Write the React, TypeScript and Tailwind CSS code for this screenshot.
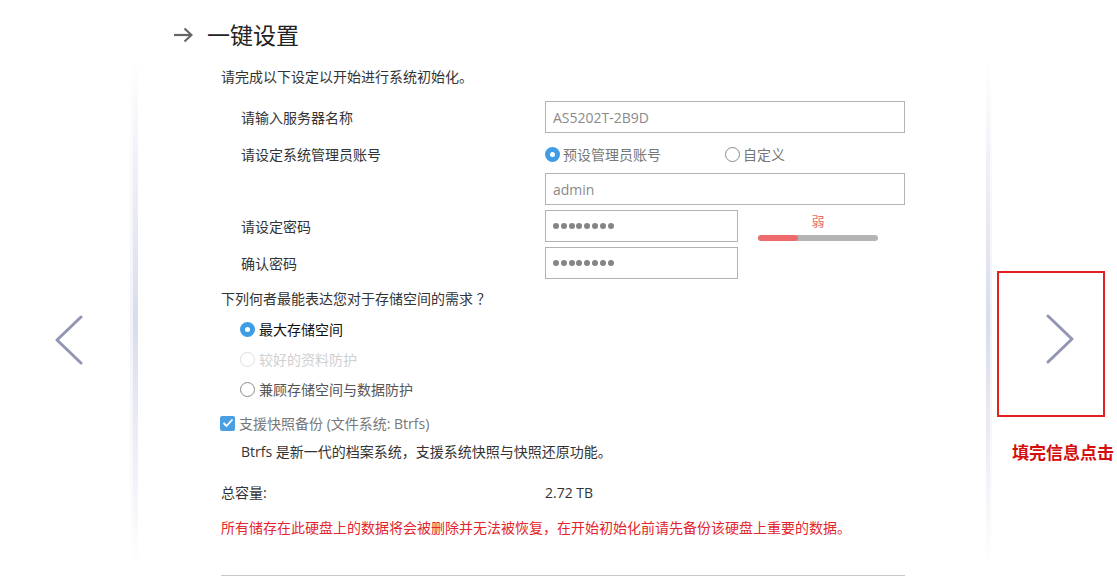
import React from "react";

const FONT = '"Open Sans", "Noto Sans CJK SC", sans-serif';

function Radio({ state }: { state: "on" | "off" | "disabled" }) {
  if (state === "on") {
    return (
      <span className="w-[15px] h-[15px] rounded-full bg-[#3f9de6] flex items-center justify-center shrink-0">
        <span className="w-[5px] h-[5px] rounded-full bg-white" />
      </span>
    );
  }
  return (
    <span
      className={
        "w-[15px] h-[15px] rounded-full border shrink-0 bg-white " +
        (state === "off" ? "border-[#8a8a8a]" : "border-[#dddddd]")
      }
    />
  );
}

function Dots() {
  return (
    <div className="flex gap-[1.8px]">
      {Array.from({ length: 8 }).map((_, i) => (
        <span key={i} className="w-[6px] h-[6px] rounded-full bg-[#858585]" />
      ))}
    </div>
  );
}

function Chevron({ dir }: { dir: "left" | "right" }) {
  return (
    <svg width="28" height="50" viewBox="0 0 28 50" fill="none">
      <polyline
        points={dir === "left" ? "26,2 2,25 26,48" : "2,2 26,25 2,48"}
        stroke="#9296b4"
        strokeWidth="3"
        strokeLinecap="round"
        strokeLinejoin="round"
      />
    </svg>
  );
}

export default function App() {
  return (
    <div
      className="w-[1117px] h-[583px] overflow-hidden bg-white flex"
      style={{ fontFamily: FONT }}
    >
      {/* left nav */}
      <div className="w-[130px] shrink-0 pl-[55px] pt-[315px]">
        <Chevron dir="left" />
      </div>
      <div className="w-[8px] shrink-0 flex">
        <div className="w-[3px] h-full bg-linear-to-b from-transparent from-10% via-[#f1f2f8] via-55% to-transparent to-97%" />
        <div className="w-[5px] h-full bg-linear-to-b from-transparent from-10% via-[#d9dcec] via-55% to-transparent to-97%" />
      </div>

      {/* card */}
      <div className="w-[848px] shrink-0 bg-white flex flex-col pt-[18px]">
        <div className="flex items-center h-[34px] pl-[35px]">
          <svg width="20" height="16" viewBox="0 0 20 16" fill="none">
            <line x1="1" y1="8" x2="18.5" y2="8" stroke="#666" strokeWidth="2.2" />
            <polyline points="11.5,1.5 18.5,8 11.5,14.5" stroke="#666" strokeWidth="2.2" fill="none" />
          </svg>
          <span className="ml-[14px] text-[23px] leading-[34px] text-[#222]">一键设置</span>
        </div>

        <div className="pl-[83px] pr-[81px] flex flex-col text-[14px] text-[#333]">
          <div className="mt-[15px] leading-[20px] h-[20px]">请完成以下设定以开始进行系统初始化。</div>

          <div className="mt-[14px] h-8 grid grid-cols-[324px_1fr] items-center">
            <span className="pl-[20px]">请输入服务器名称</span>
            <input
              readOnly
              value="AS5202T-2B9D"
              className="h-8 w-full border border-[#b3b3b3] px-[7px] text-[14px] text-[#8a8a8a] outline-none"
              style={{ fontFamily: FONT }}
            />
          </div>

          <div className="mt-[7px] h-[28px] grid grid-cols-[324px_1fr] items-center">
            <span className="pl-[20px]">请设定系统管理员账号</span>
            <div className="flex items-center">
              <div className="w-[180px] flex items-center gap-[3px]">
                <Radio state="on" />
                <span className="text-[#777]">预设管理员账号</span>
              </div>
              <div className="flex items-center gap-[3px]">
                <Radio state="off" />
                <span className="text-[#777]">自定义</span>
              </div>
            </div>
          </div>

          <div className="mt-[5px] h-8 grid grid-cols-[324px_1fr] items-center">
            <span />
            <input
              readOnly
              value="admin"
              className="h-8 w-full border border-[#b3b3b3] px-[7px] text-[14px] text-[#8a8a8a] outline-none"
              style={{ fontFamily: FONT }}
            />
          </div>

          <div className="mt-[5px] h-8 grid grid-cols-[324px_1fr] items-center">
            <span className="pl-[20px]">请设定密码</span>
            <div className="flex items-start h-8">
              <div className="w-[193px] h-8 border border-[#b3b3b3] flex items-center pl-[7px]">
                <Dots />
              </div>
              <div className="ml-[20px] w-[120px] flex flex-col items-center">
                <span className="mt-[2px] text-[13px] leading-[18px] text-[#e36c6c]">弱</span>
                <div className="mt-[5px] w-full h-[6px] rounded-full bg-[#b4b4b4] overflow-hidden">
                  <div className="w-[40px] h-full rounded-full bg-[#ef6a6d]" />
                </div>
              </div>
            </div>
          </div>

          <div className="mt-[5px] h-8 grid grid-cols-[324px_1fr] items-center">
            <span className="pl-[20px]">确认密码</span>
            <div className="w-[193px] h-8 border border-[#b3b3b3] flex items-center pl-[7px]">
              <Dots />
            </div>
          </div>

          <div className="mt-[10px] leading-[20px] h-[20px]">下列何者最能表达您对于存储空间的需求 ？</div>

          <div className="mt-[5px] flex flex-col pl-[19px]">
            <div className="h-[30px] flex items-center gap-[4px]">
              <Radio state="on" />
              <span className="text-[#111]">最大存储空间</span>
            </div>
            <div className="h-[30px] flex items-center gap-[4px]">
              <Radio state="disabled" />
              <span className="text-[#cfcfcf]">较好的资料防护</span>
            </div>
            <div className="h-[30px] flex items-center gap-[4px]">
              <Radio state="off" />
              <span className="text-[#555]">兼顾存储空间与数据防护</span>
            </div>
          </div>

          <div className="mt-[9px] h-[20px] flex items-center gap-[4px] -ml-px">
            <span className="w-[15px] h-[15px] rounded-[2px] bg-[#4a9fe2] flex items-center justify-center shrink-0">
              <svg width="12" height="10" viewBox="0 0 12 10" fill="none">
                <polyline points="1.5,5 4.5,8 10.5,1.5" stroke="white" strokeWidth="1.8" fill="none" />
              </svg>
            </span>
            <span className="text-[#777]">支援快照备份 (文件系统: Btrfs)</span>
          </div>

          <div className="mt-[9px] h-[20px] leading-[20px] pl-[20px] text-[#333]">
            Btrfs 是新一代的档案系统，支援系统快照与快照还原功能。
          </div>

          <div className="mt-[21px] h-[20px] leading-[20px] grid grid-cols-[324px_1fr]">
            <span>总容量:</span>
            <span>2.72 TB</span>
          </div>

          <div className="mt-[15px] h-[20px] leading-[20px] text-[#e3262b] whitespace-nowrap">
            所有储存在此硬盘上的数据将会被删除并无法被恢复，在开始初始化前请先备份该硬盘上重要的数据。
          </div>

          <div className="mt-[37px] border-t border-[#c8c8c8]" />
        </div>
      </div>

      <div className="w-[6px] shrink-0 flex">
        <div className="w-[4px] h-full bg-linear-to-b from-transparent from-10% via-[#d9dcec] via-55% to-transparent to-97%" />
        <div className="w-[2px] h-full bg-linear-to-b from-transparent from-10% via-[#f1f2f8] via-55% to-transparent to-97%" />
      </div>

      {/* right nav */}
      <div className="flex-1 pl-[5px] pt-[271px] flex flex-col">
        <div className="w-[108px] h-[146px] border-2 border-[#e32020] pl-[47px] pt-[41px]">
          <Chevron dir="right" />
        </div>
        <div className="mt-[24px] ml-[15px] text-[17px] leading-[24px] font-bold text-[#d40d0d] whitespace-nowrap">
          填完信息点击
        </div>
      </div>
    </div>
  );
}
